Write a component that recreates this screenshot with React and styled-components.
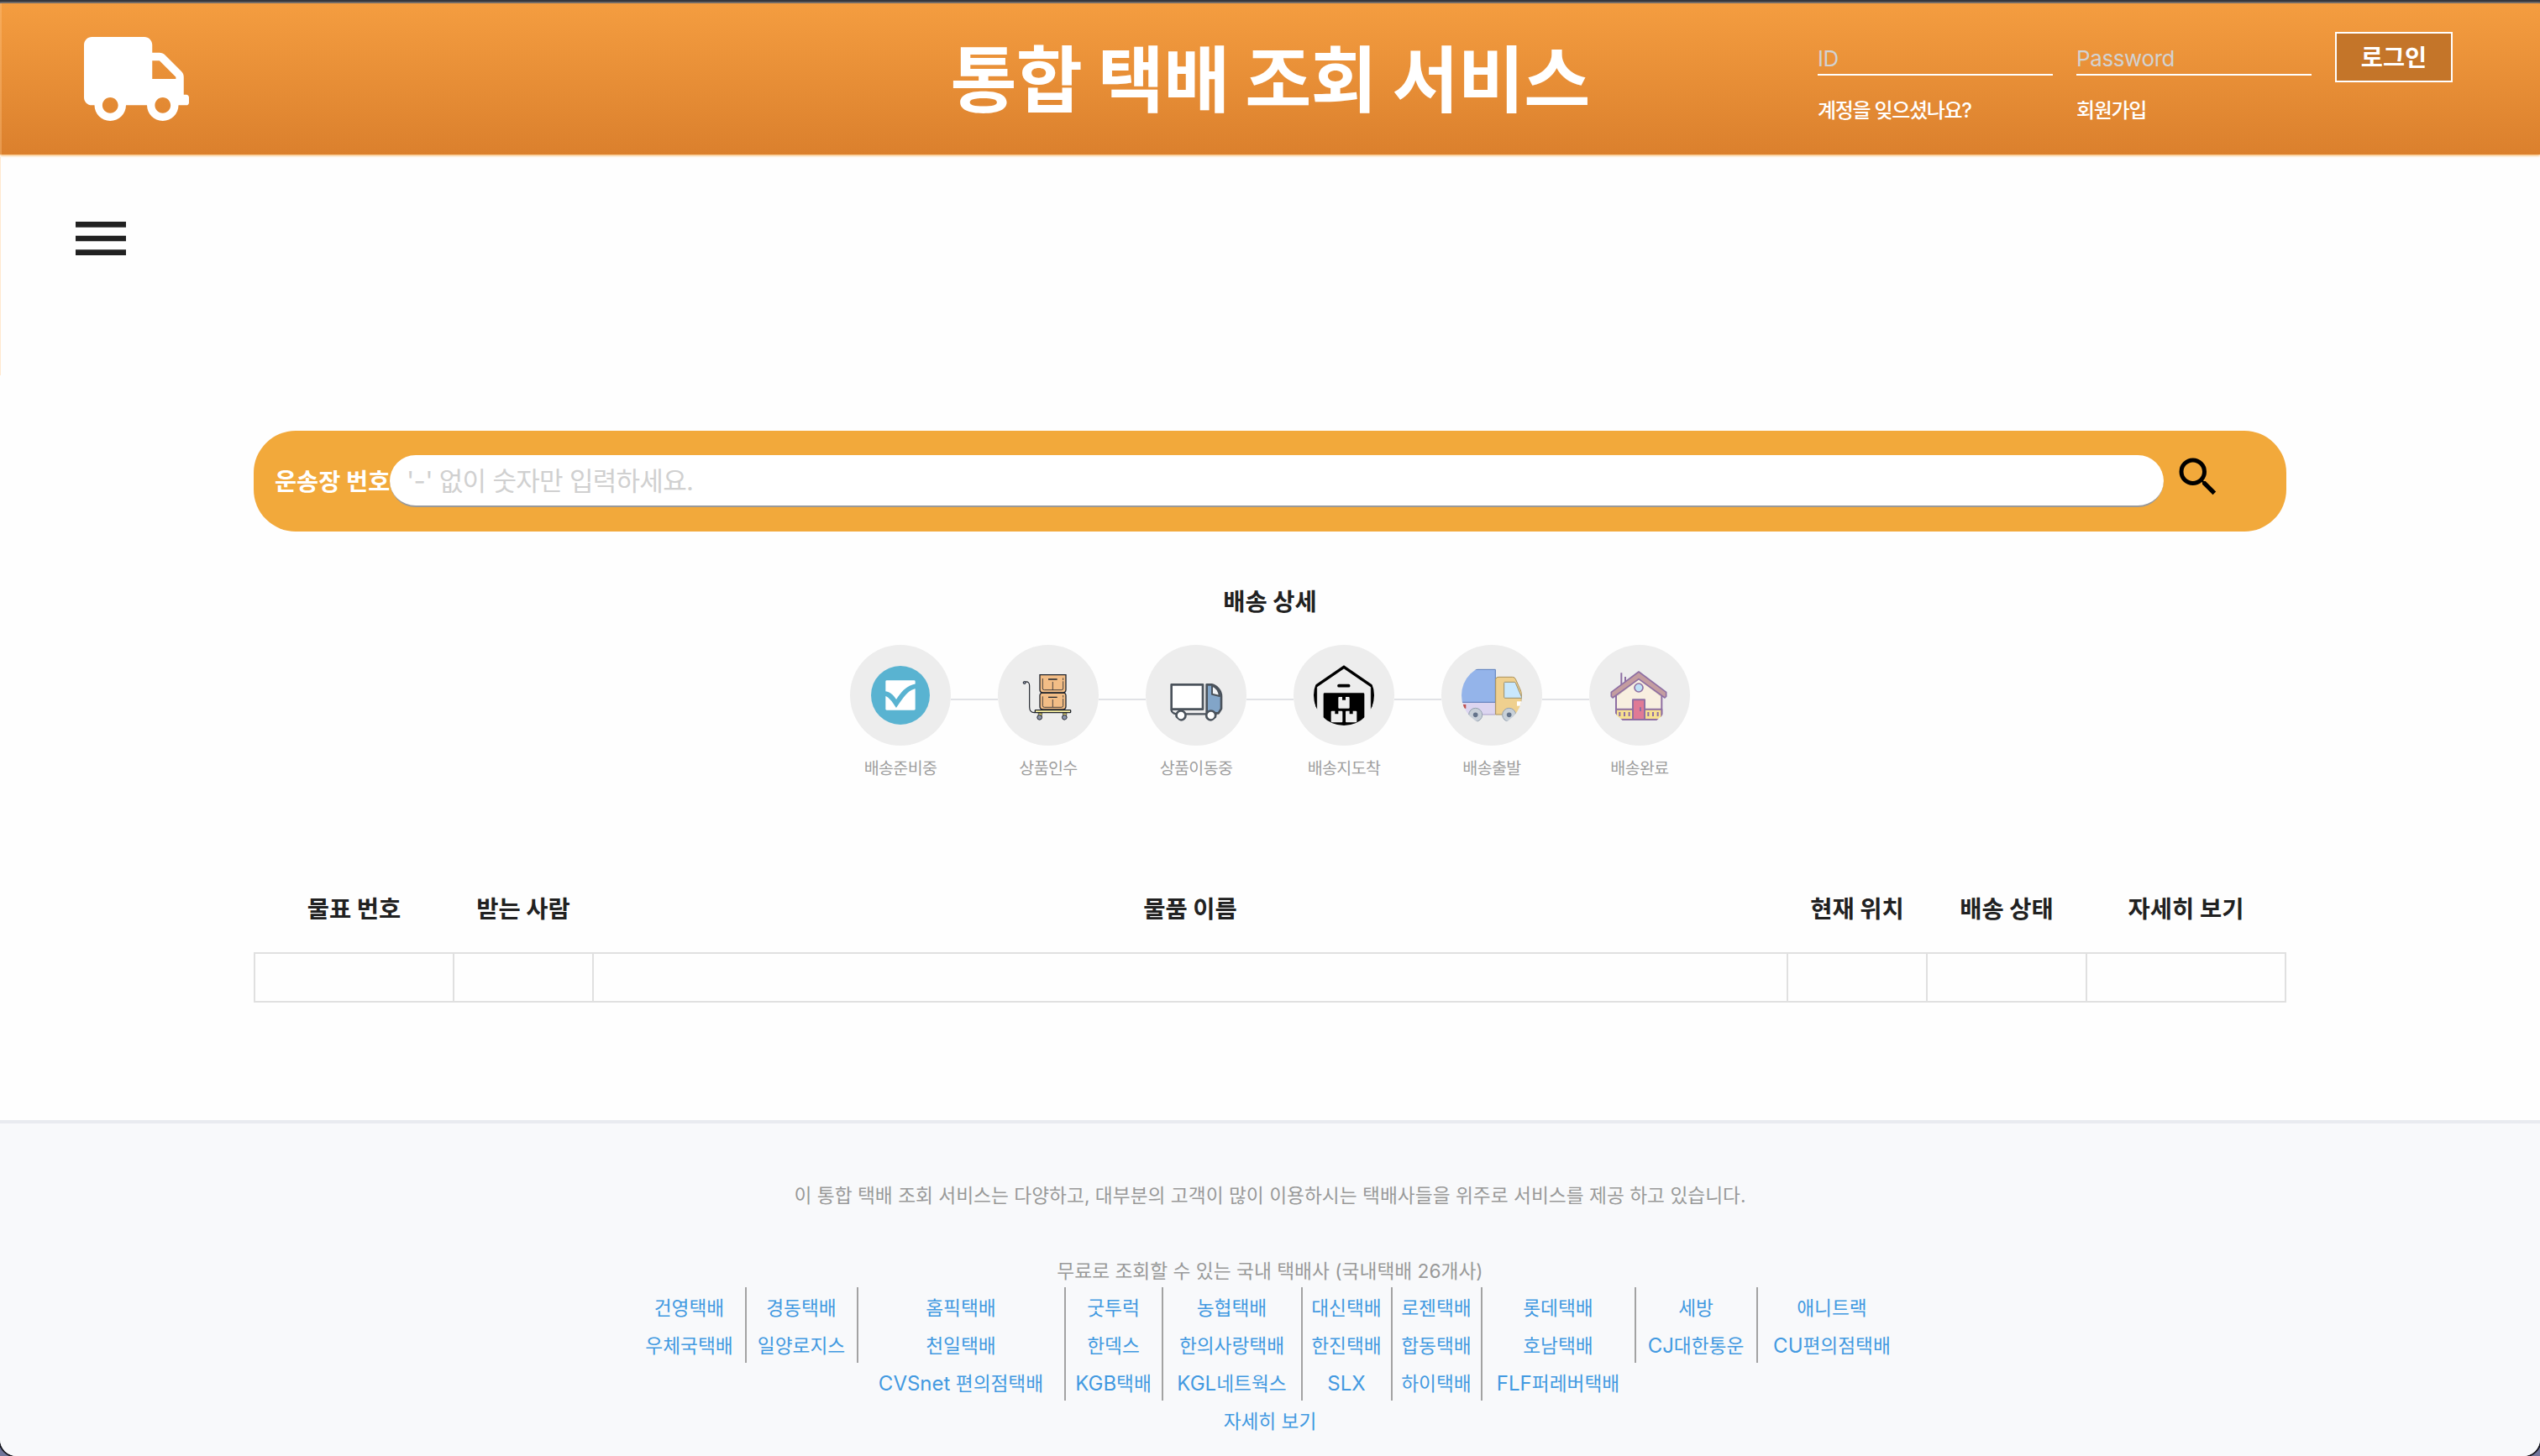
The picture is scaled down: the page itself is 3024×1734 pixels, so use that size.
import React from "react";
import styled, { createGlobalStyle } from "styled-components";
import { FaTruck } from "react-icons/fa";
import { MdMenu, MdSearch } from "react-icons/md";

const GlobalStyle = createGlobalStyle`
  *, *::before, *::after { box-sizing: border-box; }
  html, body { margin: 0; padding: 0; }
  body {
    background: #70759a;
    color: #212121;
    font-family: "Inter", "Noto Sans CJK KR", sans-serif;
  }
  input, button { font-family: inherit; margin: 0; }
  a { color: inherit; text-decoration: none; }
`;

const Window = styled.div`
  width: 3024px;
  height: 1734px;
  display: flex;
  flex-direction: column;
  background: #fefefe;
  border-radius: 0 0 20px 20px;
  overflow: hidden;
  box-shadow: 0 0 0 2px #16171f;
`;

const TopEdge = styled.div`
  flex: none;
  height: 4px;
  background: #35373d;
  border-bottom: 2px solid #5f626a;
`;

const Header = styled.header`
  flex: none;
  height: 180px;
  display: grid;
  grid-template-columns: 1fr auto 1fr;
  background: linear-gradient(#f49d40, #db802d);
  box-shadow: 0 1px 3px #f5a94a, inset 2px 0 0 rgba(255, 200, 140, 0.35);
`;

const LogoLink = styled.a`
  padding: 40px 0 0 100px;
  color: #fff;
  svg { display: block; width: 125px; height: 100px; }
`;

const SiteTitle = styled.h1`
  margin: 0;
  line-height: 171px;
  font-size: 86px;
  letter-spacing: -0.8px;
  font-weight: 700;
  color: #fff;
  white-space: nowrap;
  font-family: "Noto Sans CJK KR", sans-serif;
`;

const LoginForm = styled.form`
  justify-self: end;
  padding: 34px 104px 0 0;
  display: grid;
  grid-template-columns: 280px 280px 140px;
  grid-template-rows: 60px 68px;
  column-gap: 28px;
  align-content: start;
`;

const LoginInput = styled.input`
  width: 100%;
  height: 52px;
  padding: 12px 0 0;
  border: 0;
  border-bottom: 2px solid #fff;
  background: transparent;
  color: #fff;
  font-size: 26px;
  letter-spacing: -0.4px;
  outline: none;
  &::placeholder { color: #d2d2d2; opacity: 1; }
`;

const LoginButton = styled.button`
  height: 60px;
  padding: 0 0 4px;
  border: 2px solid #fff;
  background: #c47529;
  color: #fff;
  font-size: 28.4px;
  font-weight: 700;
`;

const AccountLink = styled.a`
  align-self: center;
  color: #fff;
  font-size: 24px;
  letter-spacing: -1.3px;
  font-weight: 500;
  line-height: 30px;
`;

const MenuRow = styled.div`
  flex: none;
  height: 329px;
  padding: 60px 0 0 80px;
  svg { display: block; width: 80px; height: 80px; }
`;

const DrawerEdge = styled.div`
  position: absolute;
  left: 0;
  top: 187px;
  width: 1px;
  height: 260px;
  background: #ffe9cf;
`;

const Content = styled.main`
  flex: none;
  width: 2420px;
  height: 821px;
  margin: 0 auto;
  display: flex;
  flex-direction: column;
`;

const SearchBar = styled.div`
  flex: none;
  height: 120px;
  padding: 0 0 0 25px;
  display: flex;
  align-items: center;
  background: #f2a93b;
  border-radius: 50px;
`;

const SearchLabel = styled.label`
  width: 137px;
  padding-top: 2px;
  font-size: 28.4px;
  font-weight: 700;
  line-height: 40px;
  color: #fff;
  white-space: nowrap;
`;

const SearchInput = styled.input`
  width: 2112px;
  height: 62px;
  padding: 0 20px;
  border: 0;
  border-bottom: 2px solid #999;
  border-radius: 32px;
  background: #fff;
  font-size: 31px;
  letter-spacing: -0.7px;
  outline: none;
  &::placeholder { color: #d0d0d0; opacity: 1; }
`;

const SearchButton = styled.button`
  width: 60px;
  height: 60px;
  margin: -11px 0 0 10.5px;
  padding: 0;
  border: 0;
  background: none;
  color: #000;
  svg { display: block; width: 60px; height: 60px; }
`;

const SectionTitle = styled.h2`
  flex: none;
  margin: 0;
  height: 135px;
  padding-top: 64px;
  text-align: center;
  font-size: 28.5px;
  font-weight: 700;
  line-height: 40px;
`;

const Steps = styled.ol`
  flex: none;
  margin: 0 auto;
  padding: 0;
  list-style: none;
  display: flex;
  gap: 56px;
`;

const Step = styled.li`
  width: 120px;
  height: 245px;
  display: flex;
  flex-direction: column;
  align-items: center;
  &:not(:last-child) > div::after {
    content: "";
    position: absolute;
    left: 120px;
    top: 64px;
    width: 56px;
    height: 2px;
    background: #e1e2e6;
  }
`;

const StepCircle = styled.div`
  position: relative;
  flex: none;
  width: 120px;
  height: 120px;
  padding: 24px;
  border-radius: 50%;
  background: #ededed;
  svg { display: block; width: 72px; height: 72px; border-radius: 50%; }
`;

const StepLabel = styled.span`
  margin-top: 13px;
  font-size: 19.5px;
  letter-spacing: -0.6px;
  line-height: 28px;
  color: #9e9e9e;
  white-space: nowrap;
`;

const columns = "237px 166px 1422px 166px 190px 237px";

const TableHead = styled.div`
  flex: none;
  height: 121px;
  padding: 50px 0 0 1px;
  display: grid;
  grid-template-columns: ${columns};
  text-align: center;
  font-size: 28.5px;
  font-weight: 700;
  line-height: 40px;
`;

const TableRow = styled.div`
  flex: none;
  height: 60px;
  display: grid;
  grid-template-columns: ${columns};
  border: 2px solid #e0e0e0;
  border-right: 0;
`;

const Cell = styled.div`
  border-right: 2px solid #e0e0e0;
`;

const Footer = styled.footer`
  flex: 1;
  padding-top: 63px;
  border-top: 4px solid #e9ebf0;
  background: #f8f9fb;
  font-size: 24px;
  color: #999;
`;

const FooterText = styled.p`
  margin: 0;
  height: ${(p) => p.$height}px;
  text-align: center;
  line-height: 45px;
  font-size: 22.72px;
`;

const Carriers = styled.div`
  display: flex;
  justify-content: center;
  align-items: flex-start;
`;

const CarrierColumn = styled.div`
  width: ${(p) => p.$width}px;
  flex: none;
  display: flex;
  flex-direction: column;
  align-items: center;
  border: 0 solid #a3a3a3;
  border-left-width: ${(p) => (p.$lines.includes("left") ? 2 : 0)}px;
  border-right-width: ${(p) => (p.$lines.includes("right") ? 2 : 0)}px;
`;

const CarrierLink = styled.a`
  height: 45px;
  padding-top: 2px;
  line-height: 45px;
  font-size: 22.7px;
  color: #4299e1;
  white-space: nowrap;
`;

const Latin = styled.span`
  font-size: 24px;
`;

const MoreRow = styled.div`
  padding-top: 2px;
  text-align: center;
`;

const CheckIcon = () => (
  <svg viewBox="0 0 216 216">
    <circle cx="108" cy="108" r="105" fill="#59b3d1" />
    <rect x="55" y="55" width="106" height="106" rx="4" fill="#fff" />
    <path d="M50 102C68 101 80 118 93 138C112 110 130 80 166 75" fill="none" stroke="#59b3d1" strokeWidth="17" />
  </svg>
);

const CartIcon = () => (
  <svg viewBox="0 0 216 216" fill="none" stroke="#20242c" strokeWidth="4">
    <path d="M61 170H58Q41 170 41 150V74Q41 58 26 60" strokeWidth="3.5" />
    <circle cx="23" cy="63" r="4.5" fill="#8d96ab" strokeWidth="3" />
    <path d="M72 172h14l-2 12h-10zM160 172h14l-2 12h-10z" fill="#f0df72" strokeWidth="2" />
    <circle cx="77" cy="187" r="8.5" fill="#8d96ab" strokeWidth="3" />
    <circle cx="166" cy="187" r="8.5" fill="#8d96ab" strokeWidth="3" />
    <path d="M78 35H171V88Q171 99 160 99H89Q78 99 78 88Z" fill="#f2bd86" />
    <path d="M84 100H166Q171 102 171 108V148Q171 159 160 159H89Q78 159 78 148V108Q78 102 84 100Z" fill="#f2bd86" />
    <rect x="61" y="161" width="127" height="9" rx="2" fill="#fcf4a3" />
    <g strokeWidth="2.4">
      <path d="M88 48V84Q88 89 94 89H155Q161 89 161 84V58M161 54V46" />
      <path d="M88 112V145Q88 151 94 151H155Q161 151 161 145V120M161 116V108" />
      <path d="M124 60V89M124 123V150" />
    </g>
    <path d="M108 51H140M108 115H140" />
  </svg>
);

const TruckIcon = () => (
  <svg viewBox="0 0 216 216" fill="none" stroke="#4b535c" strokeWidth="8" strokeLinejoin="round">
    <path d="M20 158V163Q22 172 36 175H182" strokeWidth="7" />
    <rect x="20" y="70" width="112" height="88" fill="#fff" />
    <path d="M146 70H164C182 74 198 92 198 112V156L188 172H146Z" fill="#82a5c8" />
    <path d="M165 74V104L192 111C190 94 180 80 165 74Z" fill="#f2f4f6" strokeWidth="6" />
    <circle cx="54" cy="180" r="16.5" fill="#fff" />
    <circle cx="161" cy="180" r="16.5" fill="#fff" />
  </svg>
);

const WarehouseIcon = () => (
  <svg viewBox="0 0 216 216">
    <path d="M5 170V78L108 7L211 78V170" fill="none" stroke="#000" strokeWidth="10" />
    <path d="M5 156V82L11 76V162ZM211 156V82L205 76V162Z" stroke="#000" strokeWidth="2" />
    <path d="M90 74H125" stroke="#000" strokeWidth="11" strokeLinecap="round" />
    <path d="M35 104Q35 100 39 100H177Q181 100 181 104V216H35Z" />
    <g fill="#ededed">
      <path d="M91 114H102V125H114V114H125Q128 114 128 117V152Q128 155 125 155H91Q88 155 88 152V117Q88 114 91 114Z" />
      <path d="M65 164H76V175H88V164H100Q103 164 103 167V202Q103 205 100 205H65Q62 205 62 202V167Q62 164 65 164Z" />
      <path d="M117 164H128V175H140V164H151Q154 164 154 167V202Q154 205 151 205H117Q114 205 114 202V167Q114 164 117 164Z" />
    </g>
  </svg>
);

const DepartIcon = () => (
  <svg viewBox="0 0 216 216" strokeWidth="3">
    <path d="M-10 133H121V177H-10Z" fill="#dcd5f0" stroke="#a99fc9" />
    <path d="M-10 16H121V133H-10Z" fill="#94b4ea" stroke="#5b7dbb" />
    <path d="M2 141H16V155H8Z" fill="#c0504d" />
    <path d="M122 177V50Q124 43 132 43H182Q190 43 193 50L214 97V177Z" fill="#efd08f" stroke="#a9915c" />
    <path d="M152 64Q152 61 155 61H189Q192 61 193 64L216 118H155Q152 118 152 115Z" fill="#c9e8fd" stroke="#9a8f6c" />
    <rect x="198" y="130" width="20" height="16" fill="#fff" />
    <g stroke="#93a0ae">
      <circle cx="50" cy="178" r="24" fill="#c8d0d8" />
      <circle cx="170" cy="178" r="24" fill="#c8d0d8" />
    </g>
    <circle cx="50" cy="178" r="8.5" fill="#64748b" />
    <circle cx="170" cy="178" r="8.5" fill="#64748b" />
  </svg>
);

const HomeIcon = () => (
  <svg viewBox="0 0 216 216" fill="none" stroke="#8e6fa3" strokeWidth="6" strokeLinejoin="round">
    <path d="M43 28V76M57 42V66" />
    <path d="M24 195V96L105 34L187 96V195Z" fill="#f8efe0" />
    <path d="M29 112L105 52L182 112V98L105 38L29 98Z" fill="#e6d5c0" stroke="none" />
    <rect x="24" y="158" width="163" height="37" fill="#f7e08f" />
    <path d="M37 168V183M54 168V183M71 168V183M139 168V183M156 168V183M173 168V183" />
    <path d="M7 97L105 24L203 97V112L198 117L105 50L12 117L7 112Z" fill="#c49da0" strokeWidth="5" />
    <circle cx="105" cy="81" r="15" fill="#bfe1f6" strokeWidth="5" />
    <rect x="84" y="124" width="42" height="71" fill="#e07a95" />
    <path d="M111 151V165" />
  </svg>
);

const steps = [
  { label: "배송준비중", Icon: CheckIcon },
  { label: "상품인수", Icon: CartIcon },
  { label: "상품이동중", Icon: TruckIcon },
  { label: "배송지도착", Icon: WarehouseIcon },
  { label: "배송출발", Icon: DepartIcon },
  { label: "배송완료", Icon: HomeIcon },
];

const headings = ["물표 번호", "받는 사람", "물품 이름", "현재 위치", "배송 상태", "자세히 보기"];

const carriers = [
  { width: 134, lines: "right", names: ["건영택배", "우체국택배"] },
  { width: 133, lines: "right", names: ["경동택배", "일양로지스"] },
  { width: 247, lines: "right", names: ["홈픽택배", "천일택배", "CVSnet 편의점택배"] },
  { width: 116, lines: "right", names: ["굿투럭", "한덱스", "KGB택배"] },
  { width: 166, lines: "right", names: ["농협택배", "한의사랑택배", "KGL네트웍스"] },
  { width: 107, lines: "right", names: ["대신택배", "한진택배", "SLX"] },
  { width: 107, lines: "right", names: ["로젠택배", "합동택배", "하이택배"] },
  { width: 181, lines: "", names: ["롯데택배", "호남택배", "FLF퍼레버택배"] },
  { width: 147, lines: "left right", names: ["세방", "CJ대한통운"] },
  { width: 177, lines: "", names: ["애니트랙", "CU편의점택배"] },
];

function CarrierName({ name }) {
  const [, latin, rest] = name.match(/^([A-Za-z]*)(.*)$/);
  return (
    <CarrierLink href="#">
      {latin && <Latin>{latin}</Latin>}
      {rest}
    </CarrierLink>
  );
}

export default function App() {
  return (
    <>
      <GlobalStyle />
      <Window>
        <TopEdge />
        <Header>
          <LogoLink href="#"><FaTruck /></LogoLink>
          <SiteTitle>통합 택배 조회 서비스</SiteTitle>
          <LoginForm>
            <LoginInput placeholder="ID" />
            <LoginInput type="password" placeholder="Password" />
            <LoginButton type="button">로그인</LoginButton>
            <AccountLink href="#">계정을 잊으셨나요?</AccountLink>
            <AccountLink href="#">회원가입</AccountLink>
          </LoginForm>
        </Header>
        <MenuRow>
          <MdMenu />
          <DrawerEdge />
        </MenuRow>
        <Content>
          <SearchBar>
            <SearchLabel htmlFor="invoice">운송장 번호</SearchLabel>
            <SearchInput id="invoice" placeholder="'-' 없이 숫자만 입력하세요." />
            <SearchButton type="button"><MdSearch /></SearchButton>
          </SearchBar>
          <SectionTitle>배송 상세</SectionTitle>
          <Steps>
            {steps.map(({ label, Icon }) => (
              <Step key={label}>
                <StepCircle><Icon /></StepCircle>
                <StepLabel>{label}</StepLabel>
              </Step>
            ))}
          </Steps>
          <TableHead>
            {headings.map((h) => <div key={h}>{h}</div>)}
          </TableHead>
          <TableRow>
            {headings.map((h) => <Cell key={h} />)}
          </TableRow>
        </Content>
        <Footer>
          <FooterText $height={90}>
            이 통합 택배 조회 서비스는 다양하고, 대부분의 고객이 많이 이용하시는 택배사들을 위주로 서비스를 제공 하고 있습니다.
          </FooterText>
          <FooterText $height={42}>무료로 조회할 수 있는 국내 택배사 (국내택배 26개사)</FooterText>
          <Carriers>
            {carriers.map(({ width, lines, names }) => (
              <CarrierColumn key={names[0]} $width={width} $lines={lines}>
                {names.map((n) => <CarrierName key={n} name={n} />)}
              </CarrierColumn>
            ))}
          </Carriers>
          <MoreRow><CarrierLink href="#">자세히 보기</CarrierLink></MoreRow>
        </Footer>
      </Window>
    </>
  );
}
